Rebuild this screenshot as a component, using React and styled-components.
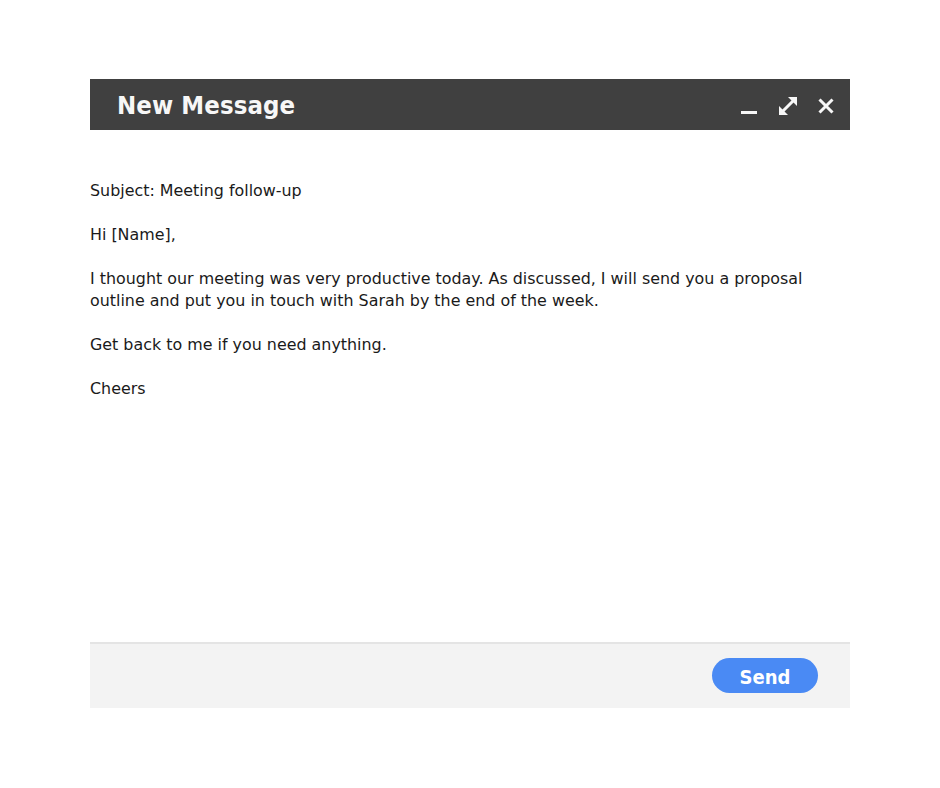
import React from 'react';
import styled, { createGlobalStyle } from 'styled-components';

const GlobalStyle = createGlobalStyle`
  html, body {
    margin: 0;
    padding: 0;
    background: #ffffff;
  }
`;

const Page = styled.div`
  padding: 79px 90px 0 90px;
  box-sizing: border-box;
  width: 940px;
`;

const Composer = styled.div`
  width: 760px;
  display: flex;
  flex-direction: column;
`;

const TitleBar = styled.div`
  height: 51px;
  background: #404040;
  display: flex;
  align-items: center;
  justify-content: space-between;
  padding: 0 16px 0 27px;
`;

const Title = styled.h1`
  margin: 0;
  font-family: "DejaVu Sans Condensed", "DejaVu Sans", sans-serif;
  font-weight: bold;
  font-size: 25.5px;
  color: #f7f7f7;
  letter-spacing: 0.1px;
`;

const Controls = styled.div`
  display: flex;
  align-items: center;
  gap: 20px;
  padding-top: 2px;
`;

const IconButton = styled.button`
  border: 0;
  background: none;
  padding: 0;
  display: flex;
  cursor: pointer;
`;

const Body = styled.div`
  height: 512px;
  padding-top: 50px;
  box-sizing: border-box;
  font-family: "DejaVu Sans", sans-serif;
  font-size: 15.9px;
  line-height: 22px;
  color: #1a1a1a;
`;

const Para = styled.p`
  margin: 0 0 22px 0;
`;

const Footer = styled.div`
  height: 66px;
  border-top: 2px solid #e4e4e4;
  background: #f3f3f3;
  display: flex;
  align-items: center;
  justify-content: flex-end;
  padding: 0 32px 2px 0;
  box-sizing: border-box;
`;

const SendButton = styled.button`
  width: 106px;
  height: 35px;
  border: 0;
  border-radius: 18px;
  background: #4a8af4;
  color: #ffffff;
  font-family: "DejaVu Sans Condensed", "DejaVu Sans", sans-serif;
  font-weight: bold;
  font-size: 20px;
  cursor: pointer;
  padding: 3px 0 0 0;
`;

const MinimizeIcon = () => (
  <svg width="18" height="20" viewBox="0 0 18 20">
    <rect x="1" y="15" width="16" height="3" fill="#f7f7f7" />
  </svg>
);

const ExpandIcon = () => (
  <svg width="20" height="20" viewBox="0 0 20 20">
    <line x1="4" y1="16" x2="16" y2="4" stroke="#f7f7f7" strokeWidth="3" />
    <polygon points="10,1 19,1 19,10" fill="#f7f7f7" />
    <polygon points="1,10 1,19 10,19" fill="#f7f7f7" />
  </svg>
);

const CloseIcon = () => (
  <svg width="16" height="16" viewBox="0 0 16 16">
    <path d="M1.5 1.5 L14.5 14.5 M14.5 1.5 L1.5 14.5" stroke="#f7f7f7" strokeWidth="3" />
  </svg>
);

const App = () => {
  return (
    <Page>
      <GlobalStyle />
      <Composer>
        <TitleBar>
          <Title>New Message</Title>
          <Controls>
            <IconButton aria-label="Minimize"><MinimizeIcon /></IconButton>
            <IconButton aria-label="Expand"><ExpandIcon /></IconButton>
            <IconButton aria-label="Close"><CloseIcon /></IconButton>
          </Controls>
        </TitleBar>
        <Body>
          <Para>Subject: Meeting follow-up</Para>
          <Para>Hi [Name],</Para>
          <Para>
            I thought our meeting was very productive today. As discussed, I will send you a proposal
            outline and put you in touch with Sarah by the end of the week.
          </Para>
          <Para>Get back to me if you need anything.</Para>
          <Para>Cheers</Para>
        </Body>
        <Footer>
          <SendButton>Send</SendButton>
        </Footer>
      </Composer>
    </Page>
  );
};

export default App;
